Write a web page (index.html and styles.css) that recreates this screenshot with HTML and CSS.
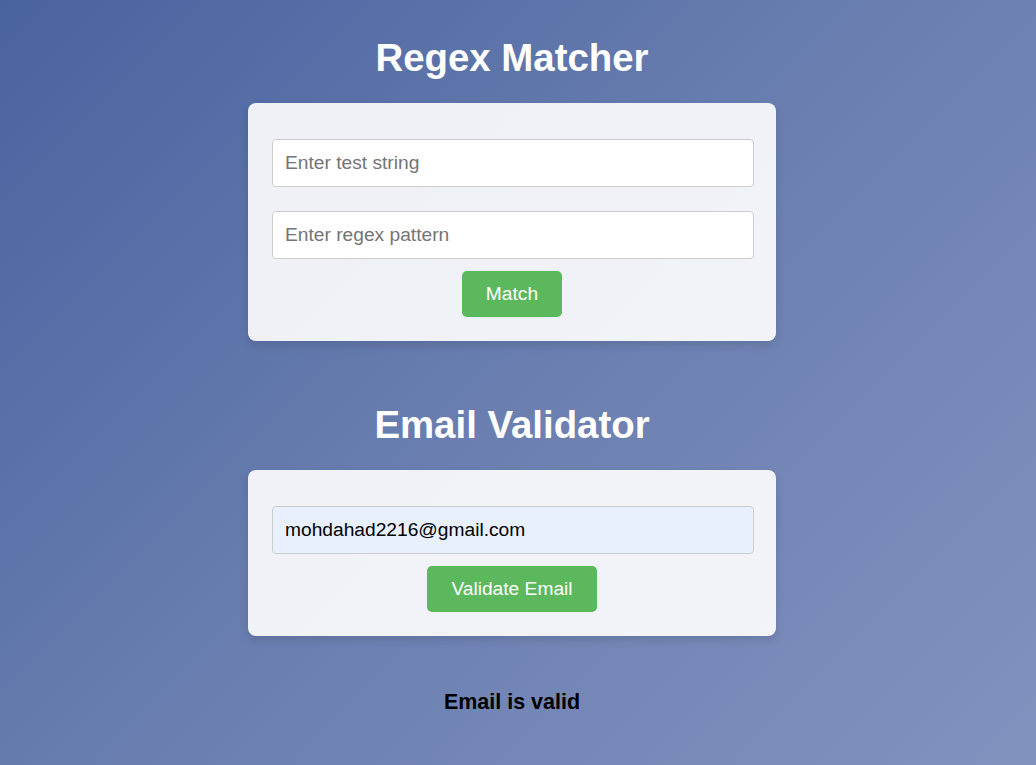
FILE: index.html
```html
<!DOCTYPE html>
<html lang="en">
<head>
<meta charset="utf-8">
<title>Regex Matcher</title>
<link rel="stylesheet" href="styles.css">
</head>
<body>
<main class="page">
  <h1 class="title title-first">Regex Matcher</h1>
  <section class="card">
    <input class="field" type="text" placeholder="Enter test string">
    <input class="field" type="text" placeholder="Enter regex pattern">
    <button class="btn" type="button">Match</button>
  </section>

  <h1 class="title title-second">Email Validator</h1>
  <section class="card">
    <input class="field field-filled" type="text" value="mohdahad2216@gmail.com">
    <button class="btn" type="button">Validate Email</button>
  </section>

  <p class="result">Email is valid</p>
</main>
</body>
</html>
```

FILE: styles.css
```css
html, body {
  height: 100%;
}

body {
  margin: 0;
  padding: 0 12px 0 0;
  min-height: 765px;
  font-family: "Liberation Sans", Arial, sans-serif;
  background: linear-gradient(135deg, #4963a0 0%, #6a7fb0 50%, #8292bf 100%);
  background-attachment: fixed;
}

.page {
  display: flex;
  flex-direction: column;
  align-items: center;
}

.title {
  margin: 0 0 23px;
  font-size: 38.4px;
  line-height: 44px;
  font-weight: bold;
  color: #ffffff;
  text-align: center;
}

.title-first {
  margin-top: 36px;
}

.title-second {
  margin-top: 62px;
}

.card {
  box-sizing: border-box;
  width: 528px;
  padding: 24px;
  display: flex;
  flex-direction: column;
  align-items: center;
  background: rgba(255, 255, 255, 0.9);
  border-radius: 8px;
  box-shadow: 0 4px 10px rgba(0, 0, 0, 0.12);
}

.field {
  box-sizing: border-box;
  width: calc(100% + 2px);
  align-self: flex-start;
  height: 48px;
  margin: 12px 0;
  padding: 12px;
  font-family: "Liberation Sans", Arial, sans-serif;
  font-size: 19.2px;
  color: #000000;
  background: #ffffff;
  border: 1px solid #cccccc;
  border-radius: 4px;
  outline: none;
}

.field::placeholder {
  color: #757575;
}

.field-filled {
  background: #e8f0fe;
}

.btn {
  height: 46px;
  padding: 0 24px;
  font-family: "Liberation Sans", Arial, sans-serif;
  font-size: 19.2px;
  color: #ffffff;
  background: #5cb85c;
  border: none;
  border-radius: 5px;
  cursor: pointer;
}

.result {
  margin: 54px 0 0;
  font-size: 21.5px;
  line-height: 24px;
  font-weight: bold;
  color: #000000;
  text-align: center;
}
```
